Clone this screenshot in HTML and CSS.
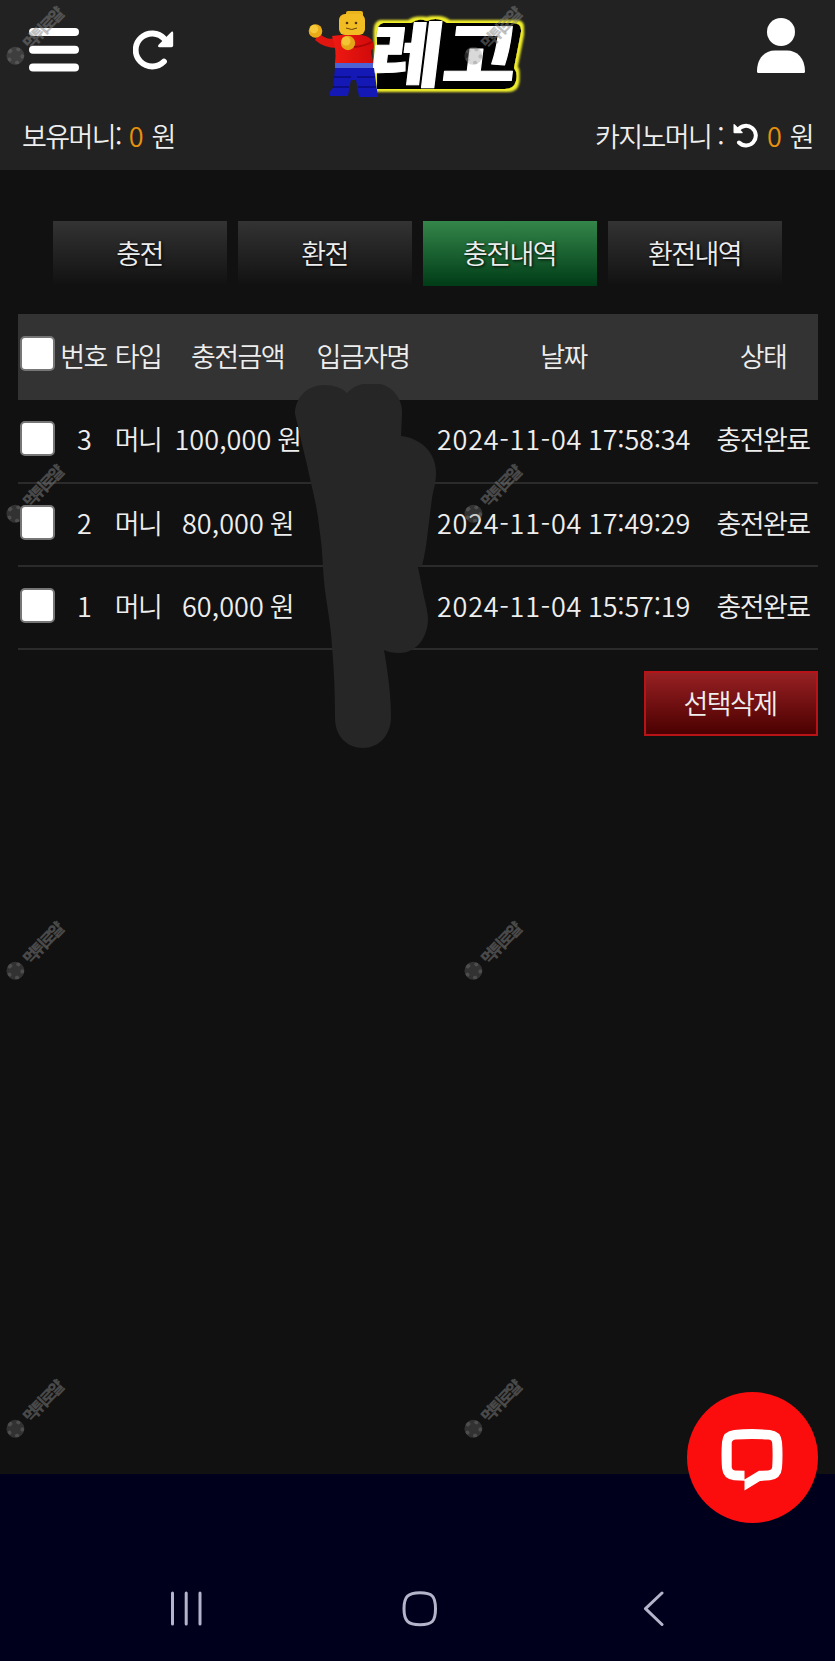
FILE: index.html
```html
<!DOCTYPE html>
<html lang="ko">

<head>
    <meta charset="UTF-8">
    <meta name="viewport" content="width=device-width, initial-scale=1.0">
    <title>충전내역</title>
    <link rel="stylesheet" href="styles.css">
</head>

<body>
    <header class="header">
        <div class="top-bar">
            <div class="top-left">
                <svg class="icon-menu" width="50" height="44" viewBox="0 0 50 44">
                    <rect x="0" y="0" width="50" height="8" rx="4" />
                    <rect x="0" y="17.7" width="50" height="8" rx="4" />
                    <rect x="0" y="35.4" width="50" height="8" rx="4" />
                </svg>
                <svg class="icon-reload" width="42" height="40" viewBox="0 0 42 40">
                    <path d="M31 31.5A16.5 16.5 0 1 1 31.5 9" fill="none" stroke="#fff" stroke-width="5.8" stroke-linecap="round" />
                    <path d="M38.5 1.8Q40.2 1 40.2 3V15.6Q40.2 17.3 38.4 17.3H26.6Q24 17 25.6 14.8Z" />
                </svg>
            </div>
            <svg class="logo" width="235" height="100" viewBox="0 0 235 100">
                <defs>
                    <filter id="outline" x="-20%" y="-30%" width="140%" height="160%">
                        <feMorphology in="SourceAlpha" operator="dilate" radius="3" result="fat" />
                        <feFlood flood-color="#f0ee2c" />
                        <feComposite in2="fat" operator="in" />
                        <feGaussianBlur stdDeviation="0.8" />
                        <feMerge>
                            <feMergeNode />
                            <feMergeNode in="SourceGraphic" />
                        </feMerge>
                    </filter>
                    <linearGradient id="shirt" x1="0" x2="1">
                        <stop offset="0" stop-color="#f01a12" />
                        <stop offset="1" stop-color="#d00a0a" />
                    </linearGradient>
                </defs>
                <path filter="url(#outline)" d="M88 23H116Q124 17 132 21Q142 16 152 23H218Q227 23 226 32L219 68Q223 73 221 81Q219 89 210 89H82V40Q80 25 88 23Z" fill="#000" />
                <text class="logo-text" transform="translate(72 81) skewX(-7) scale(1 .86)" textLength="147" lengthAdjust="spacingAndGlyphs">레고</text>
                <!-- figure -->
                <path d="M24 33Q33 42 42 37V48Q29 48 20 40Z" fill="#e01510" />
                <circle cx="20.5" cy="31" r="6.8" fill="#e9ac18" />
                <circle cx="19" cy="29" r="4.2" fill="#f6c93a" />
                <path d="M37 36Q50 34 66 35Q78 36 79 47L76 51L78 63H40Q42 50 37 36Z" fill="url(#shirt)" />
                <rect x="51" y="11" width="17" height="7" rx="2" fill="#eab41d" />
                <rect x="44" y="14" width="26" height="21" rx="6" fill="#f2bd22" />
                <circle cx="52" cy="23" r="1.3" fill="#54330a" />
                <circle cx="61" cy="23" r="1.3" fill="#54330a" />
                <path d="M51 28Q57 31 62 28" fill="none" stroke="#6c430c" />
                <circle cx="53" cy="43" r="7.2" fill="#e4a516" />
                <circle cx="51" cy="41" r="4.5" fill="#f5c435" />
                <path d="M59 47Q70 46 77 42" fill="none" stroke="#a90606" stroke-width="2" />
                <path d="M40 63H78V69H40Z" fill="#4e62d5" />
                <path d="M40 68H79L83 97H64L61 80H56L53 96H35Q33 92 38 88Z" fill="#1418b4" />
                <path d="M39 77H56M62 77H80M38 87H54M63 87H81" stroke="#080b78" stroke-width="1.5" />
            </svg>
            <svg class="icon-user" width="48" height="56" viewBox="0 0 48 56">
                <circle cx="24" cy="14" r="14" />
                <path d="M0 53.5C0 40 8 32.5 18 32.5H30C40 32.5 48 40 48 53.5Q48 55 46.5 55H1.5Q0 55 0 53.5Z" />
            </svg>
        </div>
        <div class="balance">
            <div class="balance-item">보유머니: <span class="amount">0</span> 원</div>
            <div class="balance-item">카지노머니 :
                <svg class="icon-undo" width="25" height="25" viewBox="0 0 25 25">
                    <path d="M5 7A9.8 9.8 0 1 1 6 19.5" fill="none" stroke="#fff" stroke-width="4" stroke-linecap="round" />
                    <path d="M.5 1.8Q.5.5 1.6 1.3L9.5 9Q10.3 10.2 9 10.3H1.5Q.5 10.2.5 9.2Z" />
                </svg>
                <span class="amount">0</span> 원
            </div>
        </div>
    </header>

    <main class="content">
        <nav class="tabs">
            <a class="tab">충전</a>
            <a class="tab">환전</a>
            <a class="tab active">충전내역</a>
            <a class="tab">환전내역</a>
        </nav>

        <div class="list">
            <table class="history">
                <colgroup>
                    <col class="col-check">
                    <col class="col-no">
                    <col class="col-type">
                    <col class="col-money">
                    <col class="col-name">
                    <col class="col-date">
                    <col class="col-state">
                </colgroup>
                <thead>
                    <tr>
                        <th><span class="check"></span></th>
                        <th>번호</th>
                        <th>타입</th>
                        <th>충전금액</th>
                        <th>입금자명</th>
                        <th>날짜</th>
                        <th>상태</th>
                    </tr>
                </thead>
                <tbody>
                    <tr>
                        <td><span class="check"></span></td>
                        <td>3</td>
                        <td>머니</td>
                        <td><span class="num">100,000</span> 원</td>
                        <td></td>
                        <td><span class="date">2024-11-04</span> <span class="time">17:58:34</span></td>
                        <td>충전완료</td>
                    </tr>
                    <tr>
                        <td><span class="check"></span></td>
                        <td>2</td>
                        <td>머니</td>
                        <td><span class="num">80,000</span> 원</td>
                        <td></td>
                        <td><span class="date">2024-11-04</span> <span class="time">17:49:29</span></td>
                        <td>충전완료</td>
                    </tr>
                    <tr>
                        <td><span class="check"></span></td>
                        <td>1</td>
                        <td>머니</td>
                        <td><span class="num">60,000</span> 원</td>
                        <td></td>
                        <td><span class="date">2024-11-04</span> <span class="time">15:57:19</span></td>
                        <td>충전완료</td>
                    </tr>
                </tbody>
            </table>
            <!-- hides the depositor names -->
            <svg class="name-cover" width="142" height="364" viewBox="295 384 142 364">
                <path d="M295 414C295 397 308 385 324 385Q339 385 347 393Q356 383 373 383C390 383 403 397 402 414L401 436C420 438 436 452 436 472C436 484 434 487 432 498L428 530Q426 550 422 566L418 567L424 597Q428 612 428 620C427 640 415 653 399 653Q390 653 384 650Q391 690 391 717C391 736 378 748 363 748C347 748 335 736 335 718Q335 680 332 647C331 620 324 595 323 567Q322 545 319 525C317 505 310 480 307 465Q301 440 295 414Z" />
            </svg>
        </div>
        <div class="btn-box">
            <button class="delete-btn">선택삭제</button>
        </div>
    </main>

    <footer class="nav-bar">
        <svg width="32" height="36" viewBox="0 0 32 36">
            <path d="M2.5 2V33M16.2 2V33M30 2V33" />
        </svg>
        <svg class="icon-home" width="36" height="36" viewBox="0 0 36 36">
            <path d="M18 1.7C30 1.7 33.5 5 33.5 17.7S30 33.7 18 33.7S2 30 2 17.7S6 1.7 18 1.7Z" />
        </svg>
        <svg width="22" height="36" viewBox="0 0 22 36">
            <path d="M19 2L2.5 17.7L19 33.5" />
        </svg>
    </footer>

    <div class="chat-btn">
        <svg width="62" height="62" viewBox="0 0 62 62">
            <path fill-rule="evenodd" d="M13 1Q31-.8 49 1Q60 2 61 13Q62 26 61 39Q60 50 49 51.2L39 52L23.5 61.5V51.8L13 51.2Q2 50 1 39Q0 26 1 13Q2 2 13 1ZM15 10.5Q11 10.5 10.7 14V38Q11 41 14 41.5L23.5 41.8V50.5L38 41.8L47 41.5Q51 41 51.2 38Q52 26 51.2 14Q51 10.5 47 10.5Q31 9.5 15 10.5Z" />
        </svg>
    </div>

    <div class="watermarks">
        <div class="mark"><i class="badge"></i><span>먹튀로얄</span></div>
        <div class="mark"><i class="badge"></i><span>먹튀로얄</span></div>
        <div class="mark"><i class="badge"></i><span>먹튀로얄</span></div>
        <div class="mark"><i class="badge"></i><span>먹튀로얄</span></div>
        <div class="mark"><i class="badge"></i><span>먹튀로얄</span></div>
        <div class="mark"><i class="badge"></i><span>먹튀로얄</span></div>
        <div class="mark"><i class="badge"></i><span>먹튀로얄</span></div>
        <div class="mark"><i class="badge"></i><span>먹튀로얄</span></div>
    </div>
</body>

</html>
```

FILE: styles.css
```css
* {
    box-sizing: border-box;
}

body {
    margin: 0;
    height: 1661px;
    display: flex;
    flex-direction: column;
    position: relative;
    overflow: hidden;
    background-color: #111;
    color: #eee;
    font-family: 'Noto Sans CJK KR', sans-serif;
    font-size: 27px;
    font-weight: 350;
    letter-spacing: -1.6px;
}

svg {
    display: block;
    fill: #fff;
}

/* Header */
.header {
    height: 170px;
    background-color: #222;
}

.top-bar {
    display: flex;
    height: 108px;
    padding-left: 29px;
}

.top-left {
    display: flex;
    width: 266px;
}

.icon-menu {
    margin-top: 28px;
}

.icon-reload {
    margin: 30px 0 0 54px;
}

.logo-text {
    font-size: 82px;
    font-weight: 900;
    letter-spacing: 0;
    fill: #fff;
    stroke: #fff;
    stroke-width: 1.2px;
    stroke-linejoin: round;
}

.icon-user {
    margin: 18px 0 0 227px;
}

.balance {
    display: flex;
    justify-content: space-between;
    padding: 8px 22px 0 22px;
    line-height: 40px;
}

.balance-item {
    display: flex;
    gap: 8px;
}

.amount {
    color: #e8920c;
    letter-spacing: 0;
}

.icon-undo {
    margin: 7px 1px 0 2px;
}

/* Tabs */
.content {
    flex: 1;
    padding: 51px 17px 0 18px;
}

.tabs {
    display: flex;
    gap: 11px;
    padding: 0 36px 0 35px;
}

.tab {
    flex: 1;
    height: 65px;
    padding-right: 1px;
    line-height: 64px;
    text-align: center;
    background: linear-gradient(#333, #111);
    text-shadow: 1px 1px 3px #000;
}

.tab.active {
    background: linear-gradient(#34864a, #003c17);
}

/* Table */
.list {
    position: relative;
    margin-top: 28px;
}

.history {
    width: 800px;
    table-layout: fixed;
    border-collapse: collapse;
    text-align: center;
    white-space: nowrap;
}

.col-check {
    width: 38px;
}

.col-no {
    width: 55px;
}

.col-type {
    width: 54px;
}

.col-money {
    width: 145px;
}

.col-name {
    width: 106px;
}

.col-date {
    width: 295px;
}

.history th,
.history td {
    padding: 0;
    font-weight: inherit;
}

.history th {
    height: 86px;
    padding-bottom: 3px;
    background-color: #333;
}

.history td {
    height: 83px;
    padding-bottom: 5px;
    border-bottom: 2px solid #2b2b2b;
}

.history th:last-child,
.history td:last-child {
    padding-right: 3px;
}

.num {
    letter-spacing: 0.1px;
}

.date {
    letter-spacing: 0.8px;
}

.time {
    letter-spacing: -0.2px;
}

.check {
    display: block;
    position: relative;
    z-index: 2;
    width: 35px;
    height: 35px;
    margin-left: 2px;
    background-color: #fff;
    border: 2px solid #767676;
    border-radius: 5px;
}

.history th .check {
    margin-top: -4px;
}

.name-cover {
    position: absolute;
    left: 277px;
    top: 70px;
    fill: #262626;
}

.btn-box {
    display: flex;
    justify-content: flex-end;
    margin-top: 21px;
}

.delete-btn {
    width: 174px;
    height: 65px;
    padding: 0 2px 2px 0;
    border: 2px solid #b81417;
    background: linear-gradient(#972023, #4b0000);
    color: #eee;
    font: inherit;
    letter-spacing: inherit;
}

/* Phone navigation */
.nav-bar {
    display: flex;
    justify-content: space-between;
    height: 187px;
    padding: 117px 170px 0 170px;
    background-color: #00001c;
}

.nav-bar svg {
    fill: none;
    stroke: #b4b4cb;
    stroke-width: 3px;
    stroke-linecap: round;
    stroke-linejoin: round;
}

.icon-home {
    margin-right: 5px;
}

/* Chat button */
.chat-btn {
    position: absolute;
    left: 687px;
    top: 1392px;
    width: 131px;
    height: 131px;
    padding: 37px 0 0 34px;
    border-radius: 50%;
    background-color: #fc0d0d;
}

/* Watermarks */
.watermarks {
    position: absolute;
    left: 0;
    top: 0;
    width: 835px;
    height: 1661px;
    overflow: hidden;
    display: grid;
    grid-template-columns: 457.5px 1fr;
    grid-template-rows: 457.5px 457.5px 457.5px 1fr;
    pointer-events: none;
    z-index: 1;
}

.mark {
    display: flex;
    align-items: center;
    gap: 5px;
    width: 73px;
    height: 20px;
    margin: 26px 0 0 -2px;
    transform: rotate(-46deg);
    color: rgba(130, 130, 130, 0.5);
    font-size: 16px;
    font-weight: 900;
    line-height: 20px;
    letter-spacing: -2.5px;
    white-space: nowrap;
}

.badge {
    flex: none;
    width: 18px;
    height: 18px;
    border: 4px dotted rgba(130, 130, 130, 0.35);
    border-radius: 50%;
    background-color: rgba(130, 130, 130, 0.3);
}
```
